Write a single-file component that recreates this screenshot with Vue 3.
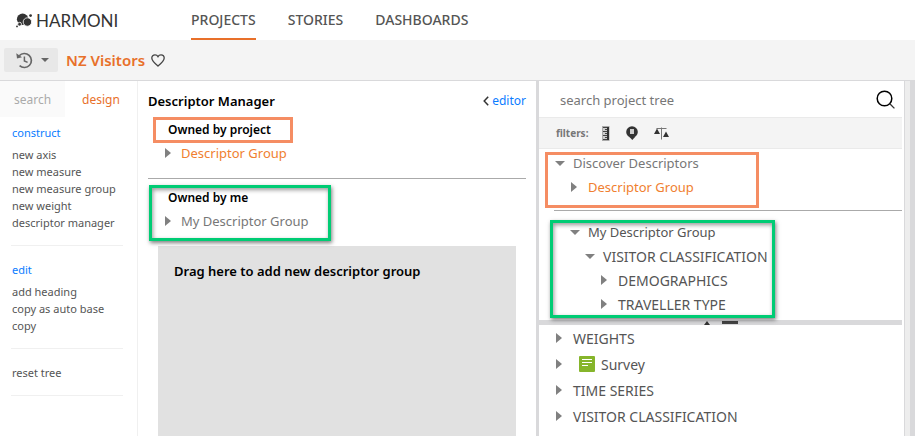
<template>
    <div class="app">
        <header class="topbar">
            <a class="logo" href="#">
                <svg width="17" height="15" viewBox="0 0 17 15" aria-hidden="true">
                    <circle cx="6.6" cy="6.2" r="5.7" fill="#333" />
                    <circle cx="11.4" cy="9" r="4.2" fill="#333" stroke="#fff" stroke-width="0.8" />
                    <circle cx="3.6" cy="11.2" r="1.9" fill="#333" stroke="#fff" stroke-width="0.8" />
                    <circle cx="14.6" cy="2.6" r="1.4" fill="#333" />
                    <circle cx="1" cy="13.4" r="0.9" fill="#333" />
                </svg>
                <span>HARMONI</span>
            </a>
            <nav class="nav">
                <a v-for="item in navItems" :key="item" href="#" :class="{ active: item === activeNav }"
                    @click.prevent="activeNav = item">{{ item }}</a>
            </nav>
        </header>

        <div class="project-bar">
            <button class="history" aria-label="History">
                <svg width="17" height="17" viewBox="0 0 17 17" fill="none" stroke="#666" aria-hidden="true">
                    <path d="M3.2 3.8A7 7 0 1 1 3.6 13.6" stroke-width="1.7" />
                    <path d="M0.3 1.2L1 6.6L6 5.2Z" fill="#666" stroke="none" />
                    <path d="M8.4 4.6V9L11.6 10.4" stroke-width="1.5" />
                </svg>
                <span class="caret"></span>
            </button>
            <h1>NZ Visitors</h1>
            <button class="favourite" aria-label="Favourite">
                <svg width="14" height="13" viewBox="0 0 14 13" fill="none" stroke="#444" stroke-width="1.3"
                    aria-hidden="true">
                    <path
                        d="M7 12.1C3.6 9.3 0.8 7 0.8 4.1C0.8 2.2 2.2 0.8 4 0.8C5.3 0.8 6.4 1.5 7 2.6C7.6 1.5 8.7 0.8 10 0.8C11.8 0.8 13.2 2.2 13.2 4.1C13.2 7 10.4 9.3 7 12.1Z" />
                </svg>
            </button>
        </div>

        <div class="workspace">
            <aside class="sidebar">
                <div class="tabs">
                    <button v-for="tab in tabs" :key="tab" :class="{ active: tab === activeTab }"
                        @click="activeTab = tab">{{ tab }}</button>
                </div>
                <section v-for="(section, index) in sections" :key="index" class="actions">
                    <h2 v-if="section.title">{{ section.title }}</h2>
                    <button v-for="action in section.items" :key="action">{{ action }}</button>
                </section>
            </aside>

            <main class="manager">
                <div class="manager-head">
                    <h2>Descriptor Manager</h2>
                    <a href="#">
                        <svg width="6" height="10" viewBox="0 0 6 10" fill="none" stroke="#333" stroke-width="1.5"
                            aria-hidden="true">
                            <path d="M5.2 0.8L1.2 5L5.2 9.2" />
                        </svg>
                        editor
                    </a>
                </div>
                <section class="owned">
                    <h3 class="mark-title">Owned by project</h3>
                    <button class="row orange"><span class="arrow"></span>Descriptor Group</button>
                </section>
                <hr>
                <section class="owned mark-group">
                    <h3>Owned by me</h3>
                    <button class="row grey"><span class="arrow"></span>My Descriptor Group</button>
                </section>
                <div class="drop-zone">Drag here to add new descriptor group</div>
            </main>

            <aside class="project-tree">
                <div class="search">
                    <input v-model="query" type="text" placeholder="search project tree"
                        aria-label="search project tree">
                    <button aria-label="Search">
                        <svg width="19" height="19" viewBox="0 0 19 19" fill="none" aria-hidden="true">
                            <circle cx="8.5" cy="8.5" r="7.3" stroke="#000" stroke-width="1.5" />
                            <path d="M13.8 13.8L18.4 18.4" stroke="#333" stroke-width="1.3" />
                        </svg>
                    </button>
                </div>
                <div class="filters">
                    <span>filters:</span>
                    <button aria-label="Measures">
                        <svg width="8" height="15" viewBox="0 0 8 15" aria-hidden="true">
                            <rect x="0.5" y="0.5" width="6.5" height="14" fill="#ccc" stroke="#aaa" />
                            <rect x="5" y="1" width="2" height="13" fill="#333" />
                            <path d="M1 1.5H5M3 3.5H5M1 5.5H5M3 7.5H5M1 9.5H5M3 11.5H5M1 13.5H5" stroke="#444" />
                        </svg>
                    </button>
                    <button aria-label="Locations">
                        <svg width="12" height="14" viewBox="0 0 12 14" aria-hidden="true">
                            <circle cx="6" cy="6" r="5.8" fill="#333" />
                            <path d="M3.5 11L6.3 14L9 11Z" fill="#333" />
                            <rect x="4" y="3" width="4" height="5" fill="#ccc" />
                        </svg>
                    </button>
                    <button aria-label="Weights">
                        <svg width="15" height="13" viewBox="0 0 15 13" aria-hidden="true">
                            <path d="M2.5 1.5H12.5M7.5 0.5V12.5" fill="none" stroke="#777" />
                            <path d="M0 7L3 1.5L6 7ZM9 10L12 4.5L15 10Z" fill="#333" />
                        </svg>
                    </button>
                </div>

                <div class="discover">
                    <div class="mark-discover">
                        <button class="row grey"><span class="arrow open"></span>Discover Descriptors</button>
                        <button class="row orange level-1"><span class="arrow"></span>Descriptor Group</button>
                    </div>
                    <hr>
                    <div class="mark-mine">
                        <button v-for="node in myNodes" :key="node.name" class="row" :class="'level-' + node.level">
                            <span class="arrow" :class="{ open: node.open }"></span>{{ node.name }}
                        </button>
                    </div>
                </div>

                <div class="splitter"><i class="up"></i><i class="grip"></i></div>

                <div class="lower">
                    <button v-for="node in rootNodes" :key="node.name" class="row">
                        <span class="arrow"></span>
                        <svg v-if="node.survey" width="16" height="16" viewBox="0 0 16 16" aria-hidden="true">
                            <rect width="16" height="16" rx="1" fill="#86b52b" />
                            <path d="M3 3.5H13M3 6.5H13M3 9.5H9" stroke="#fff" />
                        </svg>
                        {{ node.name }}
                    </button>
                </div>
            </aside>
            <div class="page-scroll"></div>
        </div>
    </div>
</template>

<script setup>
import { ref } from 'vue';

const navItems = ['PROJECTS', 'STORIES', 'DASHBOARDS'];
const activeNav = ref('PROJECTS');

const tabs = ['search', 'design'];
const activeTab = ref('design');

const query = ref('');

const sections = [
    {
        title: 'construct',
        items: ['new axis', 'new measure', 'new measure group', 'new weight', 'descriptor manager'],
    },
    {
        title: 'edit',
        items: ['add heading', 'copy as auto base', 'copy'],
    },
    {
        items: ['reset tree'],
    },
];

const myNodes = [
    { name: 'My Descriptor Group', level: 1, open: true },
    { name: 'VISITOR CLASSIFICATION', level: 2, open: true },
    { name: 'DEMOGRAPHICS', level: 3, open: false },
    { name: 'TRAVELLER TYPE', level: 3, open: false },
];

const rootNodes = [
    { name: 'WEIGHTS' },
    { name: 'Survey', survey: true },
    { name: 'TIME SERIES' },
    { name: 'VISITOR CLASSIFICATION' },
];
</script>

<style>
body {
    margin: 0;
    background: #fff;
}
</style>

<style scoped>
*,
*::before,
*::after {
    box-sizing: border-box;
}

.app {
    display: flex;
    flex-direction: column;
    min-height: 100vh;
    font-family: "Noto Sans", "Open Sans", sans-serif;
    font-size: 13px;
    color: #555;
}

button {
    padding: 0;
    border: 0;
    background: none;
    font: inherit;
    color: inherit;
    text-align: left;
    cursor: pointer;
}

svg {
    display: block;
    flex: none;
}

a {
    text-decoration: none;
}

h1,
h2,
h3 {
    margin: 0;
}

hr {
    height: 1px;
    margin: 0;
    border: 0;
    background: #aaa;
}

.topbar {
    display: flex;
    height: 40px;
}

.logo {
    display: flex;
    align-items: center;
    gap: 3px;
    width: 191px;
    padding-left: 16px;
    color: #333;
    font-family: Lato, sans-serif;
    font-size: 17px;
}

.nav {
    display: flex;
    gap: 32px;
}

.nav a {
    height: 40px;
    border-bottom: 2px solid transparent;
    line-height: 40px;
    font-size: 14px;
    font-weight: 500;
    color: #555;
}

.nav a.active {
    border-color: #e8702a;
}

.project-bar {
    display: flex;
    align-items: center;
    height: 41px;
    padding-left: 4px;
    border-bottom: 1px solid #d9d9db;
    background: #f4f4f4;
}

.history {
    display: flex;
    align-items: center;
    gap: 8px;
    width: 54px;
    height: 24px;
    padding-left: 12px;
    border-radius: 2px;
    background: #e8e8e8;
}

.caret {
    border: 4px solid transparent;
    border-top-color: #666;
    border-bottom: 0;
}

.project-bar h1 {
    margin: 0 6px 0 8px;
    font-size: 15px;
    font-weight: 600;
    line-height: 24px;
    color: #e8702a;
}

.workspace {
    display: flex;
    flex: 1;
}

.sidebar {
    flex: none;
    width: 138px;
    border-right: 1px solid #f0f0f0;
}

.tabs {
    display: flex;
    height: 36px;
    margin-bottom: 7px;
}

.tabs button {
    width: 65px;
    background: #fafafa;
    font-size: 12px;
    color: #aaa;
    text-align: center;
}

.tabs button.active {
    width: 72px;
    background: #fff;
    color: #e8702a;
}

.actions {
    display: flex;
    flex-direction: column;
    margin: 0 14px 15px 11px;
    padding: 0 1px 14px;
    border-bottom: 1px solid #f0f0f0;
    font-size: 11px;
    line-height: 17px;
}

.actions h2 {
    margin-bottom: 5px;
    font-size: 11px;
    font-weight: 400;
    color: #0a7cff;
}

.manager {
    display: flex;
    flex: 1;
    flex-direction: column;
    padding: 0 10px;
}

.manager-head {
    display: flex;
    align-items: center;
    justify-content: space-between;
    height: 39px;
    color: #000;
}

.manager-head h2 {
    font-size: 13px;
    font-weight: 600;
}

.manager-head a {
    display: flex;
    align-items: center;
    gap: 3px;
    font-size: 12px;
    color: #0a7cff;
}

.owned {
    position: relative;
    padding: 0 17px;
}

.owned h3 {
    position: relative;
    width: fit-content;
    margin-left: 3px;
    font-size: 12px;
    font-weight: 600;
    line-height: 20px;
    color: #000;
}

.manager hr {
    margin: 12px 0 9px;
}

.row {
    display: flex;
    align-items: center;
    width: 100%;
    height: 24px;
    white-space: nowrap;
}

.owned .row {
    height: 26px;
}

.row.orange {
    color: #f08030;
}

.row.grey {
    color: #777;
}

.arrow {
    width: 16px;
    flex: none;
}

.arrow::before {
    content: "";
    display: block;
    width: 0;
    border: 5px solid transparent;
    border-left: 6px solid #808080;
    border-right: 0;
}

.project-tree .arrow {
    width: 17px;
}

.project-tree .arrow.open {
    width: 18px;
    margin-left: -1px;
}

.arrow.open::before {
    border: 5px solid transparent;
    border-top-color: #808080;
    border-bottom: 0;
}

.drop-zone {
    flex: 1;
    margin: 12px 10px 0;
    padding: 16px;
    background: #e1e1e1;
    font-weight: 600;
    line-height: 18px;
    color: #000;
}

.project-tree {
    flex: none;
    width: 369px;
    padding-right: 2px;
    border: solid #d9d9db;
    border-width: 0 1px 0 3px;
}

.search {
    display: flex;
    align-items: center;
    height: 36px;
    padding: 0 7px 0 21px;
}

.search input {
    flex: 1;
    min-width: 0;
    height: 30px;
    padding: 2px 0 0;
    border: 0;
    outline: 0;
    font: inherit;
    color: #555;
}

.search input::placeholder {
    color: #777;
    opacity: 1;
}

.filters {
    display: flex;
    align-items: center;
    height: 32px;
    padding-left: 17px;
    border: solid #eaeaea;
    border-width: 1px 0;
    background: #f4f4f4;
    font-size: 10px;
    font-weight: 700;
    color: #777;
}

.filters button {
    margin-left: 14px;
}

.filters button + button {
    margin-left: 16px;
}

.discover {
    padding: 2px 0 4px 15px;
}

.discover hr {
    margin: 11px 0 9px;
}

.discover .row,
.lower .row {
    padding-left: 2px;
}

.discover .row.level-1 {
    padding-left: 17px;
}

.discover .row.level-2 {
    padding-left: 32px;
    font-size: 14px;
}

.discover .row.level-3 {
    padding-left: 47px;
    font-size: 14px;
}

.splitter {
    display: flex;
    align-items: center;
    justify-content: center;
    gap: 12px;
    height: 5px;
    background: #d9d9db;
}

.up {
    border: 3px solid transparent;
    border-top: 0;
    border-bottom: 4px solid #333;
}

.grip {
    width: 16px;
    height: 3px;
    background: #444;
}

.lower {
    padding-left: 15px;
    font-size: 14px;
}

.lower .row {
    height: 26px;
}

.lower svg {
    margin: 0 6px;
}

.page-scroll {
    width: 10px;
    flex: none;
    border-right: 5px solid #d9d9db;
    background: #ededed;
}

/* highlight frames drawn over the rows */
.mark-title::after,
.mark-group::after,
.mark-discover::after,
.mark-mine::after {
    content: "";
    position: absolute;
    border: 3px solid #f58d63;
    pointer-events: none;
}

.mark-discover,
.mark-mine {
    position: relative;
}

.mark-title::after {
    inset: -3px -22px -3px -15px;
}

.mark-group::after,
.mark-mine::after {
    border-color: #00cc74;
    box-shadow: 1px 2px 4px rgba(0, 0, 0, 0.5), inset 1px 2px 4px rgba(0, 0, 0, 0.4);
}

.mark-group::after {
    inset: -3px auto -7px 1px;
    width: 182px;
}

.mark-discover::after {
    inset: 1px auto -9px -9px;
    width: 214px;
}

.mark-mine::after {
    inset: 0 auto -2px -4px;
    width: 225px;
}
</style>
